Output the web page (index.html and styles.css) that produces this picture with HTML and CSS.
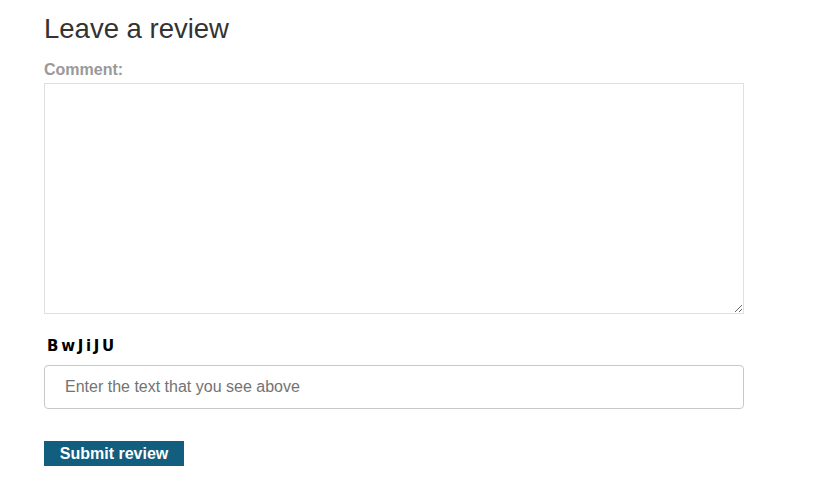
FILE: index.html
```html
<!DOCTYPE html>
<html>
<head>
<meta charset="utf-8">
<link rel="stylesheet" href="styles.css">
</head>
<body>
<section class="review">
  <h1 class="title">Leave a review</h1>
  <form class="form">
    <label class="label">Comment:</label>
    <textarea class="comment"></textarea>
    <div class="captcha">BwJiJU</div>
    <input class="captcha-input" type="text" placeholder="Enter the text that you see above">
    <button class="submit" type="button">Submit review</button>
  </form>
</section>
</body>
</html>
```
FILE: styles.css
```css
html, body {
  margin: 0;
  padding: 0;
  background: #fff;
}
body {
  font-family: "Liberation Sans", Arial, sans-serif;
  color: #333;
}
.review {
  padding: 13px 0 0 44px;
  width: 700px;
}
.title {
  margin: 0;
  font-size: 27.5px;
  font-weight: normal;
  line-height: 32px;
  color: #333;
}
.form {
  display: flex;
  flex-direction: column;
  align-items: flex-start;
}
.label {
  margin-top: 15px;
  font-size: 16px;
  font-weight: bold;
  line-height: 20px;
  color: #999;
}
.comment {
  box-sizing: border-box;
  margin: 3px 0 0 0;
  width: 700px;
  height: 231px;
  border: 1px solid #e0e0e0;
  padding: 4px;
  font-family: inherit;
  font-size: 15px;
}
.captcha {
  margin: 23px 0 0 3px;
  font-family: "DejaVu Sans", sans-serif;
  font-weight: bold;
  font-size: 15px;
  letter-spacing: 2.7px;
  line-height: 18px;
  color: #000;
}
.captcha-input {
  box-sizing: border-box;
  margin-top: 10px;
  width: 700px;
  height: 44px;
  border: 1px solid #c8c8c8;
  border-radius: 4px;
  padding: 0 20px;
  font-family: inherit;
  font-size: 16px;
  color: #333;
}
.captcha-input::placeholder {
  color: #737373;
}
.submit {
  margin-top: 32px;
  width: 140px;
  height: 25px;
  border: 0;
  padding: 0;
  background: #115e7e;
  color: #fff;
  font-family: inherit;
  font-size: 16px;
  font-weight: bold;
}
```
